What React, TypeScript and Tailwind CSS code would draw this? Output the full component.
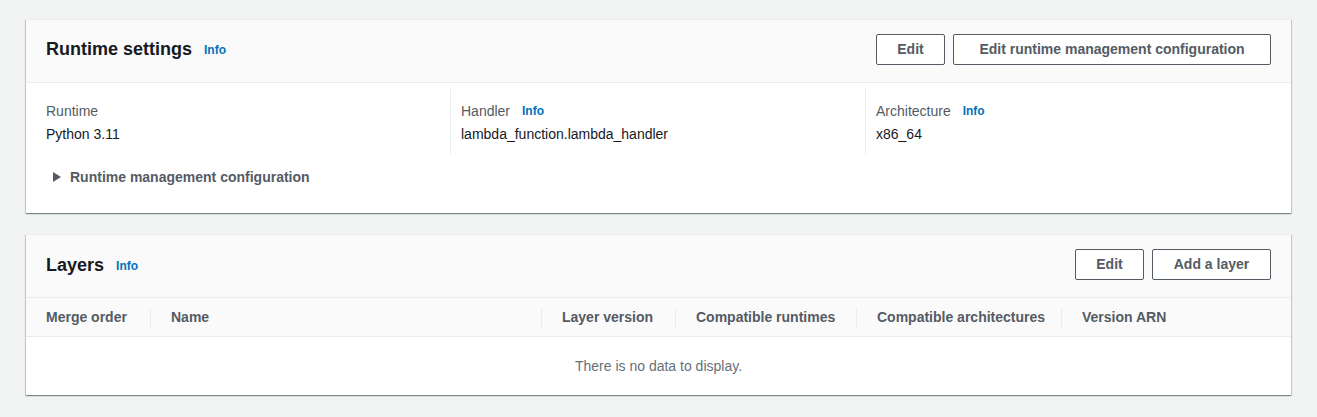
const InfoLink = () => (
  <a href="#" className="ml-3 text-[12px] font-bold text-[#0073bb] leading-none">
    Info
  </a>
);

const Button = ({ children, w }: { children: string; w: string }) => (
  <button className={`${w} h-[31px] border border-[#545b64] rounded-[2px] bg-white text-[14px] font-bold text-[#545b64] text-center whitespace-nowrap`}>
    {children}
  </button>
);

const Field = ({ label, value, info, first }: { label: string; value: string; info?: boolean; first?: boolean }) => (
  <div className={first ? "pt-[12px] pb-[10px]" : "pt-[12px] pb-[10px] pl-[10px] border-l border-[#eaeded]"}>
    <div className="flex items-center h-5 text-[14px] text-[#545b64]">
      {label}
      {info && <InfoLink />}
    </div>
    <div className="mt-[3px] h-5 text-[14px] text-[#16191f]">{value}</div>
  </div>
);

const columns = [
  { name: "Merge order", w: "w-[124px]" },
  { name: "Name", w: "w-[391px]" },
  { name: "Layer version", w: "w-[134px]" },
  { name: "Compatible runtimes", w: "w-[181px]" },
  { name: "Compatible architectures", w: "w-[205px]" },
  { name: "Version ARN", w: "flex-1" },
];

const cardShadow =
  "bg-white border-t border-[#eaeded] shadow-[0_1px_1px_0_rgba(0,28,36,0.3),1px_1px_1px_0_rgba(0,28,36,0.15),-1px_1px_1px_0_rgba(0,28,36,0.15)]";

export default function App() {
  return (
    <div className="min-h-[417px] bg-[#f2f3f3] pt-[19px] pl-[26px] pr-[26px] pb-5 font-['Liberation_Sans',Arial,sans-serif]">
      {/* Runtime settings */}
      <section className={cardShadow}>
        <div className="flex items-center justify-between bg-[#fafafa] border-b border-[#eaeded] px-5 pt-[14px] pb-[17px]">
          <div className="flex items-center">
            <h2 className="text-[18px] font-bold text-[#16191f]">Runtime settings</h2>
            <InfoLink />
          </div>
          <div className="flex gap-2">
            <Button w="w-[69px]">Edit</Button>
            <Button w="w-[318px]">Edit runtime management configuration</Button>
          </div>
        </div>
        <div className="px-5 pt-[6px] pb-[26px]">
          <div className="grid grid-cols-[404px_415px_1fr]">
            <Field first label="Runtime" value="Python 3.11" />
            <Field label="Handler" info value="lambda_function.lambda_handler" />
            <Field label="Architecture" info value="x86_64" />
          </div>
          <div className="mt-[13px] flex items-center h-5 pl-[7px] text-[14px] font-bold text-[#545b64]">
            <svg width="8" height="10" viewBox="0 0 8 10" className="mr-[9px]">
              <path d="M0 0 L8 5 L0 10 Z" fill="#545b64" />
            </svg>
            Runtime management configuration
          </div>
        </div>
      </section>

      {/* Layers */}
      <section className={`mt-[21px] ${cardShadow}`}>
        <div className="flex items-center justify-between bg-[#fafafa] border-b border-[#eaeded] px-5 pt-[14px] pb-[17px]">
          <div className="flex items-center pt-[2px]">
            <h2 className="text-[18px] font-bold text-[#16191f]">Layers</h2>
            <InfoLink />
          </div>
          <div className="flex gap-2">
            <Button w="w-[69px]">Edit</Button>
            <Button w="w-[119px]">Add a layer</Button>
          </div>
        </div>
        <div className="flex h-[39px] items-center pt-[1px] bg-[#fafafa] border-b border-[#eaeded]">
          {columns.map((c, i) => (
            <div key={c.name} className={`${c.w} flex items-center h-5 ${i === 0 ? "pl-5" : "pl-5 border-l border-[#eaeded]"}`}>
              <span className="text-[14px] font-bold text-[#545b64] whitespace-nowrap">{c.name}</span>
            </div>
          ))}
        </div>
        <div className="h-[58px] flex items-center justify-center text-[14px] text-[#687078]">
          There is no data to display.
        </div>
      </section>
    </div>
  );
}
